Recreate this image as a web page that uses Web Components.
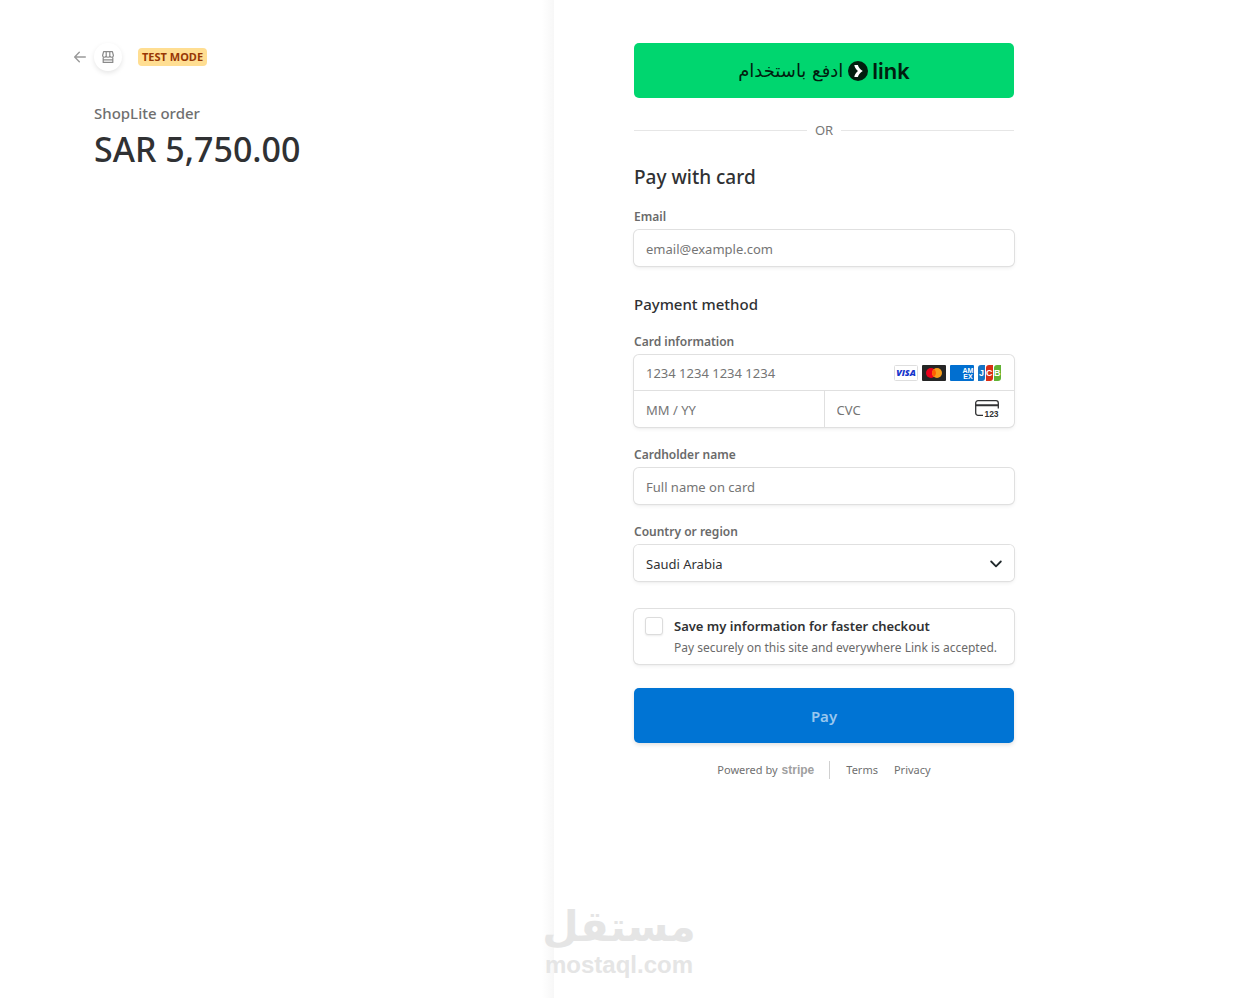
<!DOCTYPE html>
<html lang="en">
<head>
<meta charset="utf-8">
<meta name="viewport" content="width=device-width, initial-scale=1">
<title>ShopLite checkout</title>
<style>
  body {
    margin: 0;
    background: #fff;
    color: #303133;
    font: 14px/16px "Noto Sans", "Open Sans", "DejaVu Sans", sans-serif;
    --ring: 0 0 0 1px #e0e0e0, 0 2px 4px rgba(0, 0, 0, .07), 0 1px 2px rgba(0, 0, 0, .05);
    --label: #6a6a6a;
    --hint: #757575;
  }
</style>
</head>
<body>
<checkout-page>
  <order-summary slot="summary" name="ShopLite order" amount="SAR 5,750.00">TEST MODE</order-summary>
  <payment-form slot="payment"></payment-form>
</checkout-page>
<site-watermark></site-watermark>

<script>
const define = (name, html, setup) => {
  const template = document.createElement('template');
  template.innerHTML = html;
  customElements.define(name, class extends HTMLElement {
    constructor() {
      super();
      this.attachShadow({ mode: 'open' }).append(template.content.cloneNode(true));
    }
    connectedCallback() {
      if (setup) setup(this, this.shadowRoot);
    }
  });
};

define('checkout-page', `
  <style>
    :host { display: block; overflow: hidden; }
    main { display: grid; grid-template-columns: 1fr 1fr; max-width: 1108px; min-height: 100vh; }
    .summary { box-sizing: border-box; padding: 43px 80px 0 74px; background: linear-gradient(to left, #f7f7f7, #fff 12px); }
    .payment { box-sizing: border-box; padding: 43px 94px 40px 80px; background: #fff; }
  </style>
  <main>
    <section class="summary"><slot name="summary"></slot></section>
    <section class="payment"><slot name="payment"></slot></section>
  </main>`);

define('order-summary', `
  <style>
    :host { display: block; }
    header { display: flex; align-items: center; height: 28px; }
    .back { display: flex; width: 20px; }
    .shop { display: grid; place-items: center; width: 28px; height: 28px; border-radius: 50%; box-shadow: 0 2px 5px rgba(0, 0, 0, .1); }
    .badge { margin-left: 16px; padding: 0 4px; border-radius: 4px; background: #ffde92; color: #983705; font-size: 11px; line-height: 18px; font-weight: 700; }
    .total { padding: 32px 0 0 20px; }
    h1, p { margin: 0; }
    h1 { color: #6f6f6f; font-size: 15px; line-height: 20px; font-weight: 500; }
    p { margin-top: 4px; font-size: 34px; line-height: 44px; font-weight: 500; white-space: nowrap; }
  </style>
  <header>
    <a class="back" href="#" aria-label="Back">
      <svg width="12" height="12" viewBox="0 0 12 12" fill="none" stroke="#9a9a9a" stroke-width="1.4" stroke-linecap="round" stroke-linejoin="round"><path d="M11.3 6H.8M5.3 1.2.7 6l4.6 4.8"/></svg>
    </a>
    <span class="shop">
      <svg width="12" height="12" viewBox="0 0 12 12" fill="none" stroke="#8a8a8a" stroke-width="1.2" stroke-linejoin="round"><path d="M1.600.6h8.800L11.400 4.500c0 2.100-2.700 2.300-3.600.6-.6 1.500-3 1.500-3.600 0C3.300 6.800.6 6.600.6 4.500L1.600.6ZM4.200 5.100V.6M7.800 5.100V.6M1.200 6.400v5h9.600v-5M1.200 8.900h9.600"/></svg>
    </span>
    <span class="badge"><slot></slot></span>
  </header>
  <div class="total"><h1></h1><p></p></div>`,
  (el, root) => {
    root.querySelector('h1').textContent = el.getAttribute('name');
    root.querySelector('p').textContent = el.getAttribute('amount');
  });

define('link-button', `
  <style>
    :host { display: block; }
    button { display: flex; align-items: center; justify-content: center; width: 100%; height: 55px; padding: 0; border: 0; border-radius: 5px; background: #00d66f; color: #011e0f; font: inherit; cursor: pointer; }
    .ar { font: 18px/24px "DejaVu Sans", sans-serif; }
    svg { margin: 0 4px 0 5px; }
    .brand { font: 600 22px/24px Inter, sans-serif; }
  </style>
  <button type="button">
    <span class="ar" lang="ar" dir="rtl"><slot></slot></span>
    <svg width="20" height="20" viewBox="0 0 20 20"><circle cx="10" cy="10" r="10" fill="#011e0f"/><path d="M6.300 4h3.600c.6 2.400 2.300 4.500 4.900 6-2.600 1.500-4.300 3.600-4.900 6H6.300c.4-2.400 1.700-4.500 3.700-6-2-1.500-3.300-3.600-3.700-6Z" fill="#fff"/></svg>
    <span class="brand">link</span>
  </button>`);

define('or-divider', `
  <style>
    :host { display: flex; align-items: center; gap: 8px; color: #777; font-size: 13px; line-height: 18px; }
    :host::before, :host::after { content: ""; flex: 1; height: 1px; background: #e6e6e6; }
  </style>
  <slot></slot>`);

define('text-field', `
  <style>
    :host { display: flex; flex-direction: column; gap: 5px; }
    label { color: var(--label); font-size: 12px; line-height: 16px; font-weight: 600; }
    input { box-sizing: border-box; width: 100%; height: 36px; padding: 1px 12px 0; border: 0; border-radius: 5px; outline: 0; background: #fff; box-shadow: var(--ring); color: inherit; font: 13px/20px "Noto Sans", sans-serif; }
    input::placeholder { color: var(--hint); opacity: 1; }
  </style>
  <label for="field"></label>
  <input id="field" type="text">`,
  (el, root) => {
    root.querySelector('label').textContent = el.getAttribute('label');
    root.querySelector('input').placeholder = el.getAttribute('hint');
  });

define('card-brands', `
  <style>
    :host { display: flex; gap: 4px; }
    svg { display: block; }
    text { font-family: "Liberation Sans", sans-serif; font-weight: 700; fill: #fff; }
    .visa { fill: #1434cb; font-family: "Open Sans", sans-serif; font-weight: 800; font-style: italic; }
  </style>
  <svg width="24" height="16" viewBox="0 0 24 16"><rect x=".5" y=".5" width="23" height="15" rx="1" fill="#fff" stroke="#dedede"/><text class="visa" x="12" y="11" text-anchor="middle" font-size="9">VISA</text></svg>
  <svg width="24" height="16" viewBox="0 0 24 16"><rect width="24" height="16" rx="1" fill="#252525"/><circle cx="9" cy="8" r="5" fill="#eb001b"/><circle cx="15" cy="8" r="5" fill="#f79e1b"/><path d="M12 4a5 5 0 0 1 0 8 5 5 0 0 1 0-8Z" fill="#ff5f00"/></svg>
  <svg width="24" height="16" viewBox="0 0 24 16"><rect width="24" height="16" rx="1" fill="#016fd0"/><text x="18" y="8" text-anchor="middle" font-size="7">AM</text><text x="18" y="14" text-anchor="middle" font-size="7">EX</text></svg>
  <svg width="24" height="16" viewBox="0 0 24 16"><path d="M3 0h4v13a3 3 0 0 1-3 3H0V3a3 3 0 0 1 3-3Z" fill="#1674c4"/><path d="M11 0h4v13a3 3 0 0 1-3 3H8V3a3 3 0 0 1 3-3Z" fill="#d92e16"/><path d="M19 0h4v13a3 3 0 0 1-3 3h-4V3a3 3 0 0 1 3-3Z" fill="#62b234"/><text font-size="9" y="11"><tspan x="1">J</tspan><tspan x="8">C</tspan><tspan x="16">B</tspan></text></svg>`);

define('card-field', `
  <style>
    :host { display: block; }
    fieldset { display: flex; flex-direction: column; gap: 5px; min-width: 0; margin: 0; padding: 0; border: 0; }
    .label { color: var(--label); font-size: 12px; line-height: 16px; font-weight: 600; }
    .box { display: grid; grid-template-columns: 1fr 1fr; grid-template-rows: 35px 36px; gap: 1px; overflow: hidden; border-radius: 5px; background: #e0e0e0; box-shadow: var(--ring); }
    .cell { display: flex; align-items: center; min-width: 0; padding: 0 12px; background: #fff; }
    .number { grid-column: 1 / -1; }
    .cvc { padding-right: 15px; }
    input { flex: 1; min-width: 0; height: 100%; padding: 1px 0 0; box-sizing: border-box; border: 0; outline: 0; background: none; color: inherit; font: 13px/20px "Noto Sans", sans-serif; }
    input::placeholder { color: var(--hint); opacity: 1; }
  </style>
  <fieldset>
    <label class="label" for="number">Card information</label>
    <div class="box">
      <div class="cell number"><input id="number" placeholder="1234 1234 1234 1234"><card-brands></card-brands></div>
      <div class="cell"><input aria-label="Expiration" placeholder="MM / YY"></div>
      <div class="cell cvc"><input aria-label="CVC" placeholder="CVC">
        <svg width="24" height="18" viewBox="0 0 24 18"><path d="M8 15.300H3a2.300 2.300 0 0 1-2.300-2.300V3A2.300 2.300 0 0 1 3 .7h18A2.300 2.300 0 0 1 23.300 3v5.500" fill="none" stroke="#303133" stroke-width="1.300"/><path d="M.7 5.200h22.600" stroke="#303133" stroke-width="2"/><text x="16.500" y="17" text-anchor="middle" font-family="Liberation Sans, sans-serif" font-size="8.500" font-weight="700" fill="#303133">123</text></svg>
      </div>
    </div>
  </fieldset>`);

define('country-field', `
  <style>
    :host { display: flex; flex-direction: column; gap: 5px; }
    label { color: var(--label); font-size: 12px; line-height: 16px; font-weight: 600; }
    .box { display: grid; align-items: center; border-radius: 5px; box-shadow: var(--ring); }
    select, svg { grid-area: 1 / 1; }
    select { appearance: none; width: 100%; height: 36px; padding: 2px 36px 0 12px; border: 0; border-radius: 5px; outline: 0; background: #fff; color: #303133; font: 13px/20px "Noto Sans", sans-serif; }
    svg { justify-self: end; margin: 2px 12px 0 0; pointer-events: none; }
  </style>
  <label for="country">Country or region</label>
  <div class="box">
    <select id="country"><option>Saudi Arabia</option></select>
    <svg width="12" height="8" viewBox="0 0 12 8" fill="none" stroke="#20282b" stroke-width="1.800" stroke-linecap="round" stroke-linejoin="round"><path d="m1.200 1.500 4.800 4.800 4.800-4.800"/></svg>
  </div>`);

define('save-option', `
  <style>
    :host { display: block; border-radius: 5px; box-shadow: var(--ring); }
    label { display: grid; grid-template-columns: 18px 1fr; column-gap: 11px; padding: 8px 11px 7px; }
    input { appearance: none; box-sizing: border-box; width: 18px; height: 18px; margin: 0; border: 1px solid #dcdcdc; border-radius: 3px; background: #fff; box-shadow: 0 1px 2px rgba(0, 0, 0, .08); }
    b { font-size: 13px; line-height: 18px; font-weight: 600; }
    span { grid-column: 2; margin-top: 4px; color: #6a6a6a; font-size: 12px; line-height: 18px; white-space: nowrap; }
  </style>
  <label>
    <input type="checkbox">
    <b>Save my information for faster checkout</b>
    <span>Pay securely on this site and everywhere Link is accepted.</span>
  </label>`);

define('pay-button', `
  <style>
    :host { display: block; }
    button { width: 100%; height: 55px; padding: 0; border: 0; border-radius: 5px; background: #0074d4; box-shadow: 0 2px 4px rgba(0, 0, 0, .12); color: #99c7ee; font: inherit; font-size: 15px; font-weight: 600; cursor: pointer; }
  </style>
  <button type="submit"><slot></slot></button>`);

define('legal-links', `
  <style>
    :host { display: flex; align-items: center; justify-content: center; height: 18px; font-size: 11px; line-height: 18px; color: #707070; }
    a { color: inherit; text-decoration: none; }
    .powered { display: flex; gap: 4px; }
    .powered b { color: #a0a0a0; font: 700 12px/18px "Liberation Sans", sans-serif; }
    nav { display: flex; gap: 16px; margin-left: 15px; padding-left: 16px; border-left: 1px solid #d0d0d0; }
  </style>
  <a class="powered" href="#">Powered by <b>stripe</b></a>
  <nav><a href="#">Terms</a><a href="#">Privacy</a></nav>`);

define('payment-form', `
  <style>
    :host { display: block; }
    form { display: flex; flex-direction: column; }
    h2, h3 { margin: 0; line-height: 24px; }
    h2 { margin: 26px 0 20px; font-size: 19px; font-weight: 500; }
    h3 { margin: 26px 0 18px; font-size: 15px; font-weight: 500; }
    or-divider { margin-top: 23px; }
    card-field { margin-bottom: 20px; }
    country-field { margin: 20px 0 28px; }
    pay-button { margin: 24px 0 18px; }
  </style>
  <form>
    <link-button>ادفع باستخدام</link-button>
    <or-divider>OR</or-divider>
    <h2>Pay with card</h2>
    <text-field label="Email" hint="email@example.com"></text-field>
    <h3>Payment method</h3>
    <card-field></card-field>
    <text-field label="Cardholder name" hint="Full name on card"></text-field>
    <country-field></country-field>
    <save-option></save-option>
    <pay-button>Pay</pay-button>
    <legal-links></legal-links>
  </form>`);

define('site-watermark', `
  <style>
    :host { position: absolute; left: 50%; top: 902px; transform: translateX(-50%); display: flex; flex-direction: column; align-items: center; color: #e5e5e5; pointer-events: none; }
    .ar { font: 700 42px/50px "DejaVu Sans", sans-serif; }
    .en { font: 700 24px/26px "Liberation Sans", sans-serif; }
  </style>
  <span class="ar" lang="ar" dir="rtl">مستقل</span>
  <span class="en">mostaql.com</span>`);
</script>
</body>
</html>
